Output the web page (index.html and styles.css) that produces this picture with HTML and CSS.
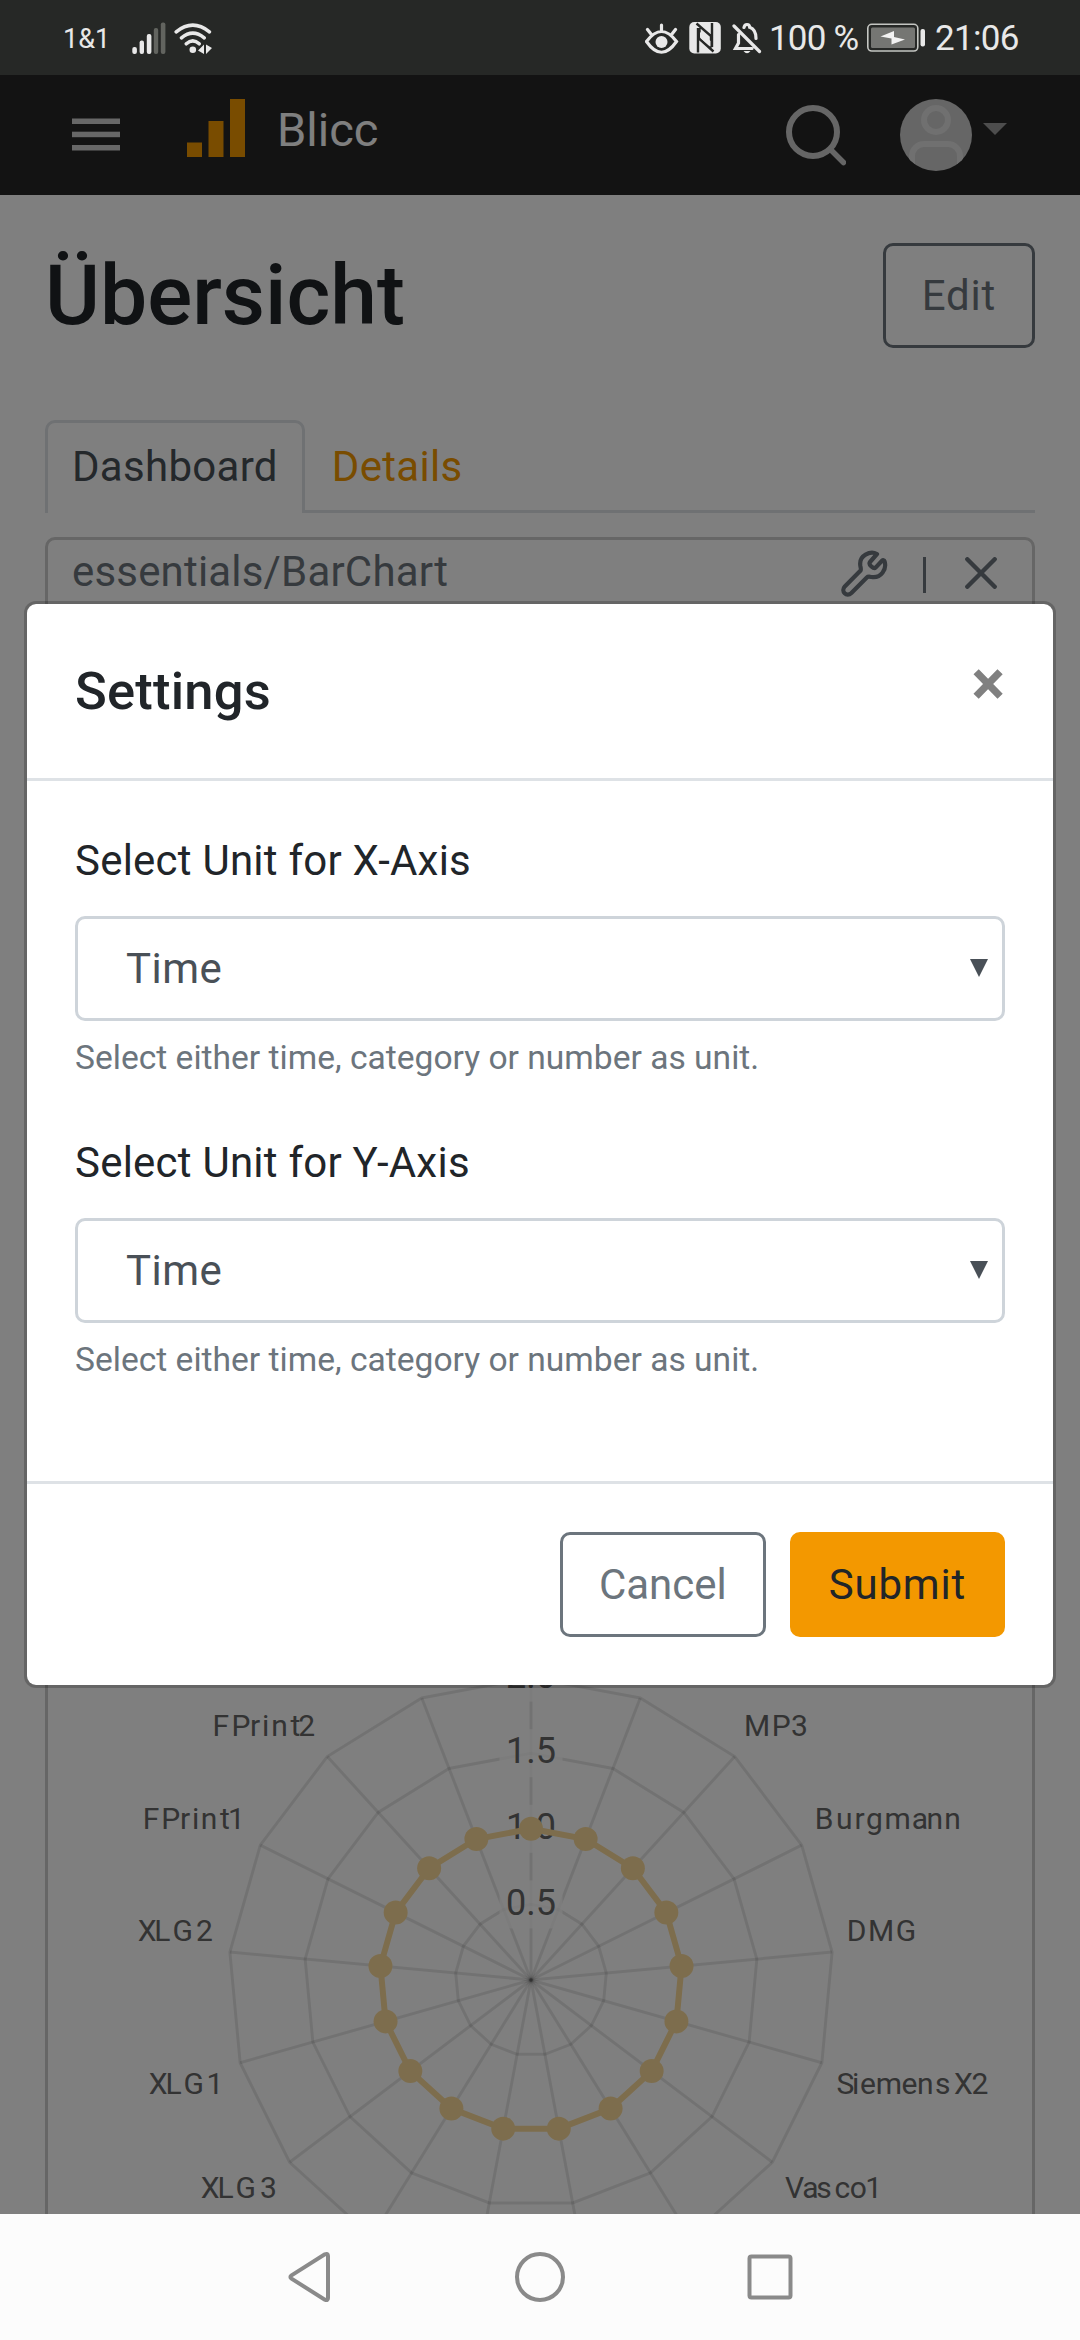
FILE: index.html
```html
<!DOCTYPE html>
<html lang="de">
<head>
<meta charset="utf-8">
<title>Blicc</title>
<link rel="stylesheet" href="styles.css">
</head>
<body>
<div class="screen">
  <div class="statusbar">
    <span class="carrier">1&amp;1</span>
    <svg class="signal" width="34" height="34" viewBox="132 20 34 34" fill="#e8e8e8">
      <rect x="132.3" y="46" width="4.6" height="7" rx="2"/>
      <rect x="139.6" y="39.5" width="4.4" height="13.5" rx="2"/>
      <rect x="146.8" y="33" width="4.6" height="20" rx="2"/>
      <rect x="153.8" y="27" width="4.4" height="26" rx="2" fill="#62645f"/>
      <rect x="160.8" y="21.5" width="4.6" height="31.5" rx="2" fill="#62645f"/>
    </svg>
    <svg class="wifi" width="40" height="34" viewBox="174 20 40 34" fill="none" stroke="#e8e8e8" stroke-width="3.6" stroke-linecap="round">
      <path d="M176.2 30.8Q192.8 17.5 209.4 30.8M181.5 36.8Q192.8 27.5 204.2 36.8M186.3 42.8Q192.8 36.8 199.2 42.8"/>
      <circle cx="192.8" cy="48.8" r="3.3" fill="#e8e8e8" stroke="none"/>
      <path d="M204 43.5V53L198 49.5ZM206 43.5V53L212 47Z" fill="#e8e8e8" stroke="none"/>
    </svg>
    <div class="status-right">
      <svg class="eye" width="34" height="34" viewBox="645 20 34 34" fill="none" stroke="#e8e8e8" stroke-width="3.2" stroke-linecap="round">
        <path d="M646.5 40.5Q661.5 20.5 676.5 40.5Q661.5 62 646.5 40.5ZM661.5 24V29.5M647.5 28.5L651 33M675.5 28.5L672 33"/>
        <circle cx="661.5" cy="41" r="6" fill="#e8e8e8" stroke="none"/>
      </svg>
      <svg class="nfc" width="33" height="34" viewBox="689 20 33 34">
        <rect x="689.3" y="21" width="31.5" height="31.5" rx="5" fill="#e8e8e8"/>
        <path d="M696.5 22.500L711 35V46.500M698 51.500V27M713.500 50.500L699.500 38V27M712 22V46" fill="none" stroke="#262826" stroke-width="2.4"/>
        <path d="M700 31L710.5 40V45.5L700 36.5Z" fill="#e8e8e8"/>
      </svg>
      <svg class="bell" width="30" height="34" viewBox="732 20 30 34" fill="none" stroke="#e8e8e8" stroke-width="3.2" stroke-linecap="round">
        <path d="M734 25L759.5 50.5M738.5 33.5V42L735.5 47.5H752M744 26.5Q744.5 23.5 747 23.5Q749.5 23.5 749.7 26.3Q756 28.5 756 37.5"/>
        <path d="M743.5 50H750.5Q747 54.5 743.5 50Z" fill="#e8e8e8" stroke="none"/>
      </svg>
      <span class="percent">100 %</span>
      <svg class="battery" width="59" height="30" viewBox="867 23 59 30">
        <rect x="867.8" y="24.3" width="50" height="26.7" rx="4" fill="none" stroke="#c4c6c2" stroke-width="1.6"/>
        <rect x="871" y="27.5" width="44" height="20.5" rx="1.5" fill="#757673"/>
        <path d="M880.5 36.5L891.5 38.5V44.500L905 39.5L894 37V31Z" fill="#f2f2f2"/>
        <rect x="920.5" y="29" width="4.5" height="17.5" rx="2" fill="#e8e8e8"/>
      </svg>
      <span class="clock">21:06</span>
    </div>
  </div>

  <div class="page">
    <header class="navbar">
      <svg class="menu" width="48" height="34" viewBox="0 0 48 34" fill="#cfcfcf">
        <rect width="48" height="5.5" y="0.5"/><rect width="48" height="5.5" y="13.7"/><rect width="48" height="5.5" y="27"/>
      </svg>
      <svg class="logo" width="58" height="58" viewBox="0 0 58 58" fill="#f39800">
        <rect x="0" y="43.5" width="15" height="14.5"/><rect x="21.5" y="22" width="15" height="36"/><rect x="43" y="0" width="15" height="58"/>
      </svg>
      <span class="brand">Blicc</span>
      <svg class="search" width="62" height="62" viewBox="784 104 62 62" fill="none" stroke="#ccc">
        <circle cx="813" cy="132" r="24" stroke-width="6"/><path d="M831.5 150.5L843.5 162.5" stroke-width="5.5" stroke-linecap="round"/>
      </svg>
      <svg class="avatar" width="72" height="72" viewBox="0 0 72 72">
        <defs><clipPath id="face"><circle cx="36" cy="36" r="36"/></clipPath></defs>
        <circle cx="36" cy="36" r="36" fill="#ccc"/>
        <g clip-path="url(#face)" fill="none" stroke="#e0e0e0" stroke-width="6">
          <circle cx="36" cy="21" r="12"/><rect x="12" y="45" width="48" height="50" rx="12"/>
        </g>
      </svg>
      <span class="caret"></span>
    </header>

    <main class="content">
      <div class="title-row">
        <h1>Übersicht</h1>
        <button class="btn btn-outline wide">Edit</button>
      </div>
      <nav class="tabs">
        <a class="tab active">Dashboard</a>
        <a class="tab">Details</a>
      </nav>
      <section class="card bar-card">
        <div class="card-head">
          <span class="card-title">essentials/BarChart</span>
          <svg class="wrench" width="48" height="48" viewBox="0 0 24 24" fill="none" stroke="#6c757d" stroke-width="2.1" stroke-linejoin="round">
            <path d="M18.5 2.5C15.3 .8 9.2 3 10.2 8.6C10.4 9.5 10.6 10.3 10.3 10.7L2.4 18.7C.2 21.2 3.3 24.3 5.7 22L13.4 14.2C14 13.6 14.8 13.8 15.7 14C20.5 14.8 23.5 10.2 22.3 6.2C22.1 5.5 21.5 5.4 21 5.9L17.8 9.3C16.9 10.2 14 7.8 15 6.5Z"/>
          </svg>
          <span class="divider"></span>
          <svg class="remove" width="32" height="32" viewBox="0 0 32 32" stroke="#6c757d" stroke-width="4.4" stroke-linecap="round">
            <path d="M2.3 2.3L29.7 29.7M29.7 2.3L2.3 29.7"/>
          </svg>
        </div>
      </section>
      <section class="card radar-card">
        <svg id="radar" class="radar" width="984" height="614" viewBox="48 1600 984 614"></svg>
      </section>
    </main>

    <div class="backdrop">
      <div class="modal">
        <div class="modal-header">
          <h5>Settings</h5>
          <span class="close">×</span>
        </div>
        <div class="modal-body">
          <div class="form-group">
            <label>Select Unit for X-Axis</label>
            <div class="select"><span>Time</span><i class="arrow"></i></div>
            <small>Select either time, category or number as unit.</small>
          </div>
          <div class="form-group">
            <label>Select Unit for Y-Axis</label>
            <div class="select"><span>Time</span><i class="arrow"></i></div>
            <small>Select either time, category or number as unit.</small>
          </div>
        </div>
        <div class="modal-footer">
          <button class="btn btn-outline">Cancel</button>
          <button class="btn btn-primary wide">Submit</button>
        </div>
      </div>
    </div>
  </div>

  <div class="softkeys">
    <svg width="46" height="52" viewBox="0 0 46 52"><path d="M4.5 24.4L37.8 3.3Q41 2 41 5V47Q41 50 37.8 48.7L4.5 27.6Q2.3 26 4.5 24.4Z"/></svg>
    <svg width="52" height="52" viewBox="0 0 52 52"><circle cx="26" cy="26" r="23"/></svg>
    <svg width="46" height="52" viewBox="0 0 46 52"><rect x="2.5" y="5.5" width="41" height="41" rx="2"/></svg>
  </div>
</div>
<script src="radar.js"></script>
</body>
</html>
```
FILE: styles.css
```css
* { box-sizing: border-box; }
body { margin: 0; font-family: Roboto, "Liberation Sans", sans-serif; font-size: 42px; line-height: 1.5; color: #212529; }
svg { display: block; flex: none; }
h1, h5 { margin: 0; font-weight: 500; }
.screen { width: 1080px; height: 2340px; display: flex; flex-direction: column; overflow: hidden; }

/* system status bar */
.statusbar { height: 75px; flex: none; display: flex; align-items: center; padding: 0 61px 0 63px; background: #262826; color: #e8e8e8; line-height: 1; }
.carrier { width: 69px; font-size: 27px; padding-top: 3px; }
.wifi { margin-left: 8px; }
.status-right { margin-left: auto; display: flex; align-items: center; }
.nfc { margin-left: 10px; }
.bell { margin-left: 10px; }
.percent { width: 98px; margin-left: 7px; font-size: 35px; letter-spacing: -.8px; padding-top: 2px; white-space: nowrap; }
.battery { width: 59px; }
.clock { width: 84px; margin-left: 9px; font-size: 35px; letter-spacing: -.7px; padding-top: 2px; }

/* application */
.page { position: relative; height: 2139px; flex: none; display: flex; flex-direction: column; background: #fff; }
.navbar { height: 120px; flex: none; display: flex; align-items: flex-start; padding: 0 72px; background: #272727; }
.menu { margin-top: 43px; }
.logo { margin: 24px 0 0 67px; }
.brand { margin: 19px 0 0 32px; color: #fff; font-size: 47px; line-height: 72px; }
.search { margin: 29px 0 0 auto; }
.avatar { margin: 24px 0 0 54px; }
.caret { margin: 48px 1px 0 11px; border: 12px solid transparent; border-top-color: #9a9a9a; border-bottom: 0; }
.content { flex: 1; min-height: 0; display: flex; flex-direction: column; padding: 48px 45px 0; overflow: hidden; }
.title-row { display: flex; justify-content: space-between; }
h1 { font-size: 84px; line-height: 105px; }
.btn { height: 105px; padding: 0 36px; border: 3px solid #6c757d; border-radius: 10px; background: none; color: #6c757d; font: inherit; }
.btn-primary { border-color: #f39800; background: #f39800; color: #212529; }
.wide { letter-spacing: .8px; }
.tabs { display: flex; flex: none; margin: 72px 0 24px; height: 93px; box-shadow: inset 0 -3px #dee2e6; letter-spacing: .3px; }
.tab { padding: 12px 24px; border: 3px solid transparent; border-bottom: 0; color: #f39800; }
.tab.active { background: #fff; border-color: #dee2e6; border-radius: 10px 10px 0 0; color: #495057; }
.card { border: 3px solid #ccc; border-radius: 10px; flex: none; }
.bar-card { height: 870px; }
.card-head { display: flex; align-items: center; height: 63px; padding: 0 35px 0 24px; color: #6c757d; }
.card-title { flex: 1; letter-spacing: .18px; }
.wrench { margin-top: 2px; }
.divider { width: 3px; height: 36px; margin: 6px 39px 0 35px; background: #6c757d; }
.remove { margin-top: 3px; }
.radar-card { flex: 1; min-height: 0; display: flex; flex-direction: column; justify-content: flex-end; margin-top: 48px; border-bottom: 0; border-radius: 10px 10px 0 0; }
.grid { fill: none; stroke: #000; stroke-opacity: .1; stroke-width: 3; }
.plate { fill: #fff; fill-opacity: .75; }
.tick { fill: #666; font-size: 36px; text-anchor: middle; }
.axis { fill: #666; font-size: 30px; }
.series { fill: none; stroke: #fbdb9b; stroke-width: 6; }
.dot { fill: #fbdb9b; }

/* dialog */
.backdrop { position: absolute; inset: 0; padding: 526px 24px 0; background: rgba(0, 0, 0, .5); }
.modal { border: 3px solid rgba(0, 0, 0, .2); border-radius: 12px; background: #fff; background-clip: padding-box; }
.modal-header { display: flex; justify-content: space-between; align-items: flex-start; padding: 48px; border-bottom: 3px solid #dee2e6; }
h5 { font-size: 52.5px; line-height: 78px; letter-spacing: .2px; }
.close { font-size: 63px; font-weight: 700; line-height: 1; color: #808080; }
.modal-body { padding: 48px; }
.form-group { display: flex; flex-direction: column; margin-bottom: 48px; }
label { margin-bottom: 24px; letter-spacing: .23px; }
.select { display: flex; align-items: center; justify-content: space-between; height: 105px; padding: 0 14px 0 48px; border: 3px solid #ced4da; border-radius: 10px; color: #495057; letter-spacing: .5px; }
.arrow { border: 9px solid transparent; border-top: 18px solid #495057; border-bottom: 0; margin-top: -2px; }
small { margin-top: 12px; font-size: 33.6px; line-height: 50px; color: #6c757d; }
.modal-footer { display: flex; justify-content: flex-end; gap: 24px; padding: 48px; border-top: 3px solid #dee2e6; }

/* system soft keys */
.softkeys { flex: 1; display: flex; justify-content: space-between; align-items: center; padding: 0 287px; background: #fcfcfc; }
.softkeys svg { fill: none; stroke: #8a8a8a; stroke-width: 4; }
```
FILE: radar.js
```js
const svg = document.getElementById('radar');
const CX = 531, CY = 1980, STEP = 75.6, AXES = 17;

function add(tag, attrs, text) {
  const el = document.createElementNS('http://www.w3.org/2000/svg', tag);
  for (const key in attrs) el.setAttribute(key, attrs[key]);
  if (text) el.textContent = text;
  svg.appendChild(el);
}
function ring(radius) {
  return Array.from({ length: AXES }, (_, i) => {
    const a = (i * 2 * Math.PI) / AXES;
    return [CX + radius * Math.sin(a), CY - radius * Math.cos(a)];
  });
}

for (let level = 1; level <= 4; level++) {
  add('polygon', { class: 'grid', points: ring(level * STEP).join(' ') });
}
ring(4 * STEP).forEach(([x, y]) => add('line', { class: 'grid', x1: CX, y1: CY, x2: x, y2: y }));

['0.5', '1.0', '1.5', '2.0'].forEach((label, i) => {
  const y = CY - (i + 1) * STEP;
  add('rect', { class: 'plate', x: CX - 31.5, y: y - 24, width: 63, height: 48 });
  add('text', { class: 'tick', x: CX, y: y + 10.2 }, label);
});

// glyph origins and baseline of each axis label
[
  ['FPrint2', 1735.8, '212.5 231.5 250 262 271.3 290.5 298.3'],
  ['FPrint1', 1829, '142.8 161.2 180 192 200.7 220 228'],
  ['XLG2', 1941, '137.8 154.2 172.4 196'],
  ['XLG1', 2094, '148.8 165.5 183.4 206.5'],
  ['XLG3', 2198, '200.8 217.5 235.4 260'],
  ['MP3', 1735.8, '744.1 771.7 791'],
  ['Burgmann', 1829, '814.7 835.9 854.5 866.1 884.4 911.7 926.4 944.3'],
  ['DMG', 1941, '846.7 868.1 895.8'],
  ['SiemensX2', 2094, '836.5 852 859.9 875.8 901.6 917.1 935.1 954.1 971.5'],
  ['Vasco1', 2198, '784.9 802.2 816.3 834.4 849.7 865.3'],
].forEach(([name, y, x]) => add('text', { class: 'axis', x, y }, name));

const values = ring(2 * STEP);
add('polygon', { class: 'series', points: values.join(' ') });
values.forEach(([cx, cy]) => add('circle', { class: 'dot', cx, cy, r: 12 }));
```
